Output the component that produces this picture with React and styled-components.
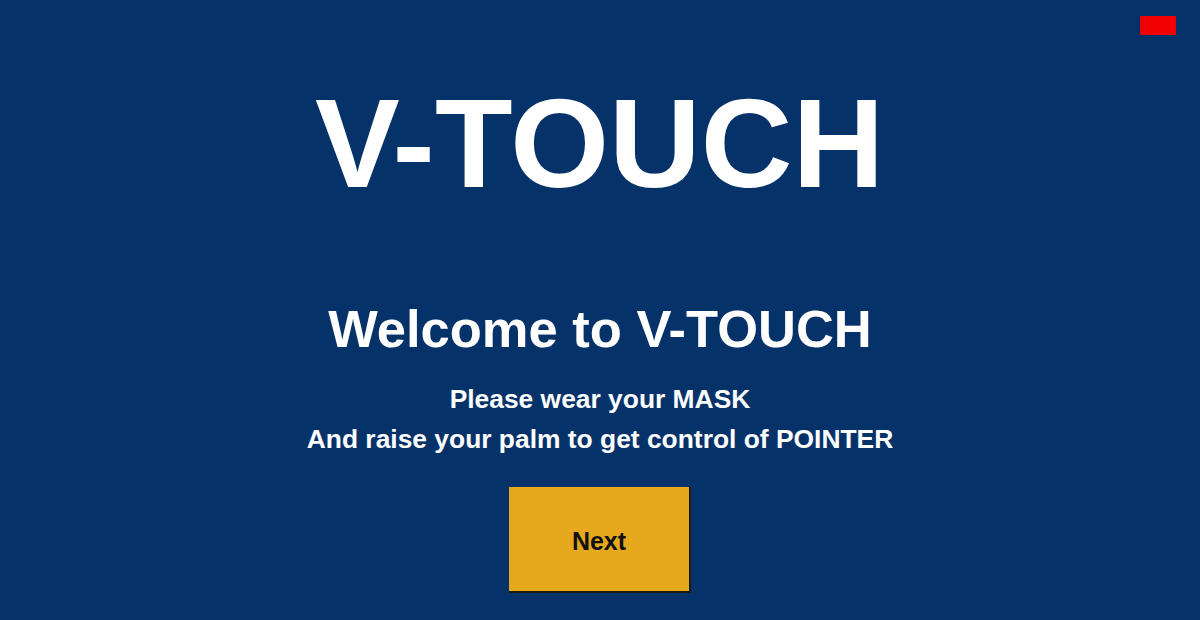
import React from 'react';
import styled, { createGlobalStyle } from 'styled-components';

const GlobalStyle = createGlobalStyle`
  html, body {
    margin: 0;
    padding: 0;
    background: #06326a;
  }
  body {
    font-family: "Liberation Sans", Arial, sans-serif;
  }
`;

const Screen = styled.div`
  position: relative;
  height: 620px;
  background: #06326a;
  display: flex;
  flex-direction: column;
  align-items: center;
  padding-top: 80px;
  box-sizing: border-box;
  color: #ffffff;
  overflow: hidden;
`;

const Indicator = styled.div`
  position: absolute;
  top: 16px;
  right: 24px;
  width: 36px;
  height: 19px;
  background: #f00000;
`;

const Title = styled.h1`
  margin: 0 0 0 -1px;
  font-size: 127px;
  line-height: 1;
  font-weight: bold;
`;

const Welcome = styled.h2`
  margin: 96px 0 0;
  font-size: 52.5px;
  line-height: 1;
  font-weight: bold;
`;

const Instructions = styled.div`
  margin-top: 23px;
  display: flex;
  flex-direction: column;
  align-items: center;
`;

const Line = styled.p`
  margin: 0;
  font-size: 26.4px;
  line-height: 40px;
  font-weight: bold;
`;

const NextButton = styled.button`
  margin: 28px 2px 0 0;
  padding: 5px 0 0;
  width: 180px;
  height: 104px;
  background: #e6a91e;
  border: none;
  box-shadow: 1px 1px 0 1px #1c1a14;
  color: #111111;
  font-family: inherit;
  font-size: 25px;
  font-weight: bold;
  cursor: pointer;
`;

const App = () => {
  return (
    <>
      <GlobalStyle />
      <Screen>
        <Indicator />
        <Title>V-TOUCH</Title>
        <Welcome>Welcome to V-TOUCH</Welcome>
        <Instructions>
          <Line>Please wear your MASK</Line>
          <Line>And raise your palm to get control of POINTER</Line>
        </Instructions>
        <NextButton>Next</NextButton>
      </Screen>
    </>
  );
};

export default App;
